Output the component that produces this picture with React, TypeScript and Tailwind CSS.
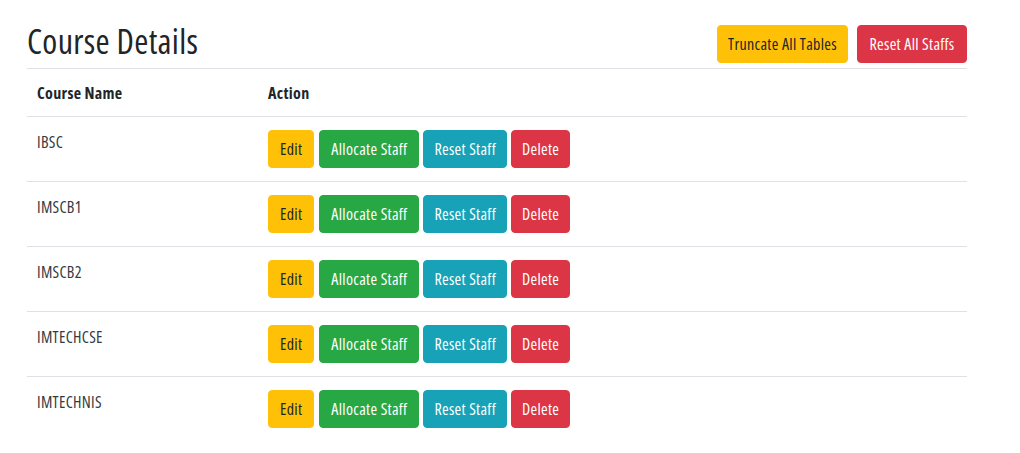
const COURSES = ["IBSC", "IMSCB1", "IMSCB2", "IMTECHCSE", "IMTECHNIS"];

function Btn({ className, children }: { className: string; children: React.ReactNode }) {
  return (
    <button
      className={`h-[38px] px-[10px] rounded border text-[16px] leading-6 tracking-[0.02em] whitespace-nowrap ${className}`}
    >
      {children}
    </button>
  );
}

export default function App() {
  return (
    <div className="bg-white min-h-[453px] text-[#212529] font-['Open_Sans',sans-serif] font-stretch-condensed tracking-[0.02em]">
      <div className="w-[940px] ml-[27px]">
        {/* Page header */}
        <div className="flex justify-between items-start pt-[25px] pb-[5px] border-b border-[#dee2e6]">
          <h2 className="text-[34px] leading-[33px] font-medium">Course Details</h2>
          <div className="flex gap-[9px]">
            <Btn className="bg-[#ffc107] border-[#ffc107] text-[#212529] w-[131px]">Truncate All Tables</Btn>
            <Btn className="bg-[#dc3545] border-[#dc3545] text-white w-[110px]">Reset All Staffs</Btn>
          </div>
        </div>

        {/* Table */}
        <div className="grid grid-cols-[231px_1fr] border-b border-[#dee2e6] text-[16px] leading-6 font-bold">
          <div className="px-[10px] pt-3 pb-[11px]">Course Name</div>
          <div className="px-[10px] pt-3 pb-[11px]">Action</div>
        </div>
        {COURSES.map((name, i) => (
          <div
            key={name}
            className={`grid grid-cols-[231px_1fr] ${i > 0 ? "border-t border-[#dee2e6]" : ""}`}
          >
            <div className="px-[10px] pt-[13px] text-[16px] leading-6 text-[#343a40]">{name}</div>
            <div className="px-[10px] pt-[13px] pb-[13px] flex gap-1">
              <Btn className="bg-[#ffc107] border-[#ffc107] text-[#212529] px-[11px]">Edit</Btn>
              <Btn className="bg-[#28a745] border-[#28a745] text-white ml-px px-[11px]">Allocate Staff</Btn>
              <Btn className="bg-[#17a2b8] border-[#17a2b8] text-white">Reset Staff</Btn>
              <Btn className="bg-[#dc3545] border-[#dc3545] text-white">Delete</Btn>
            </div>
          </div>
        ))}
      </div>
    </div>
  );
}
